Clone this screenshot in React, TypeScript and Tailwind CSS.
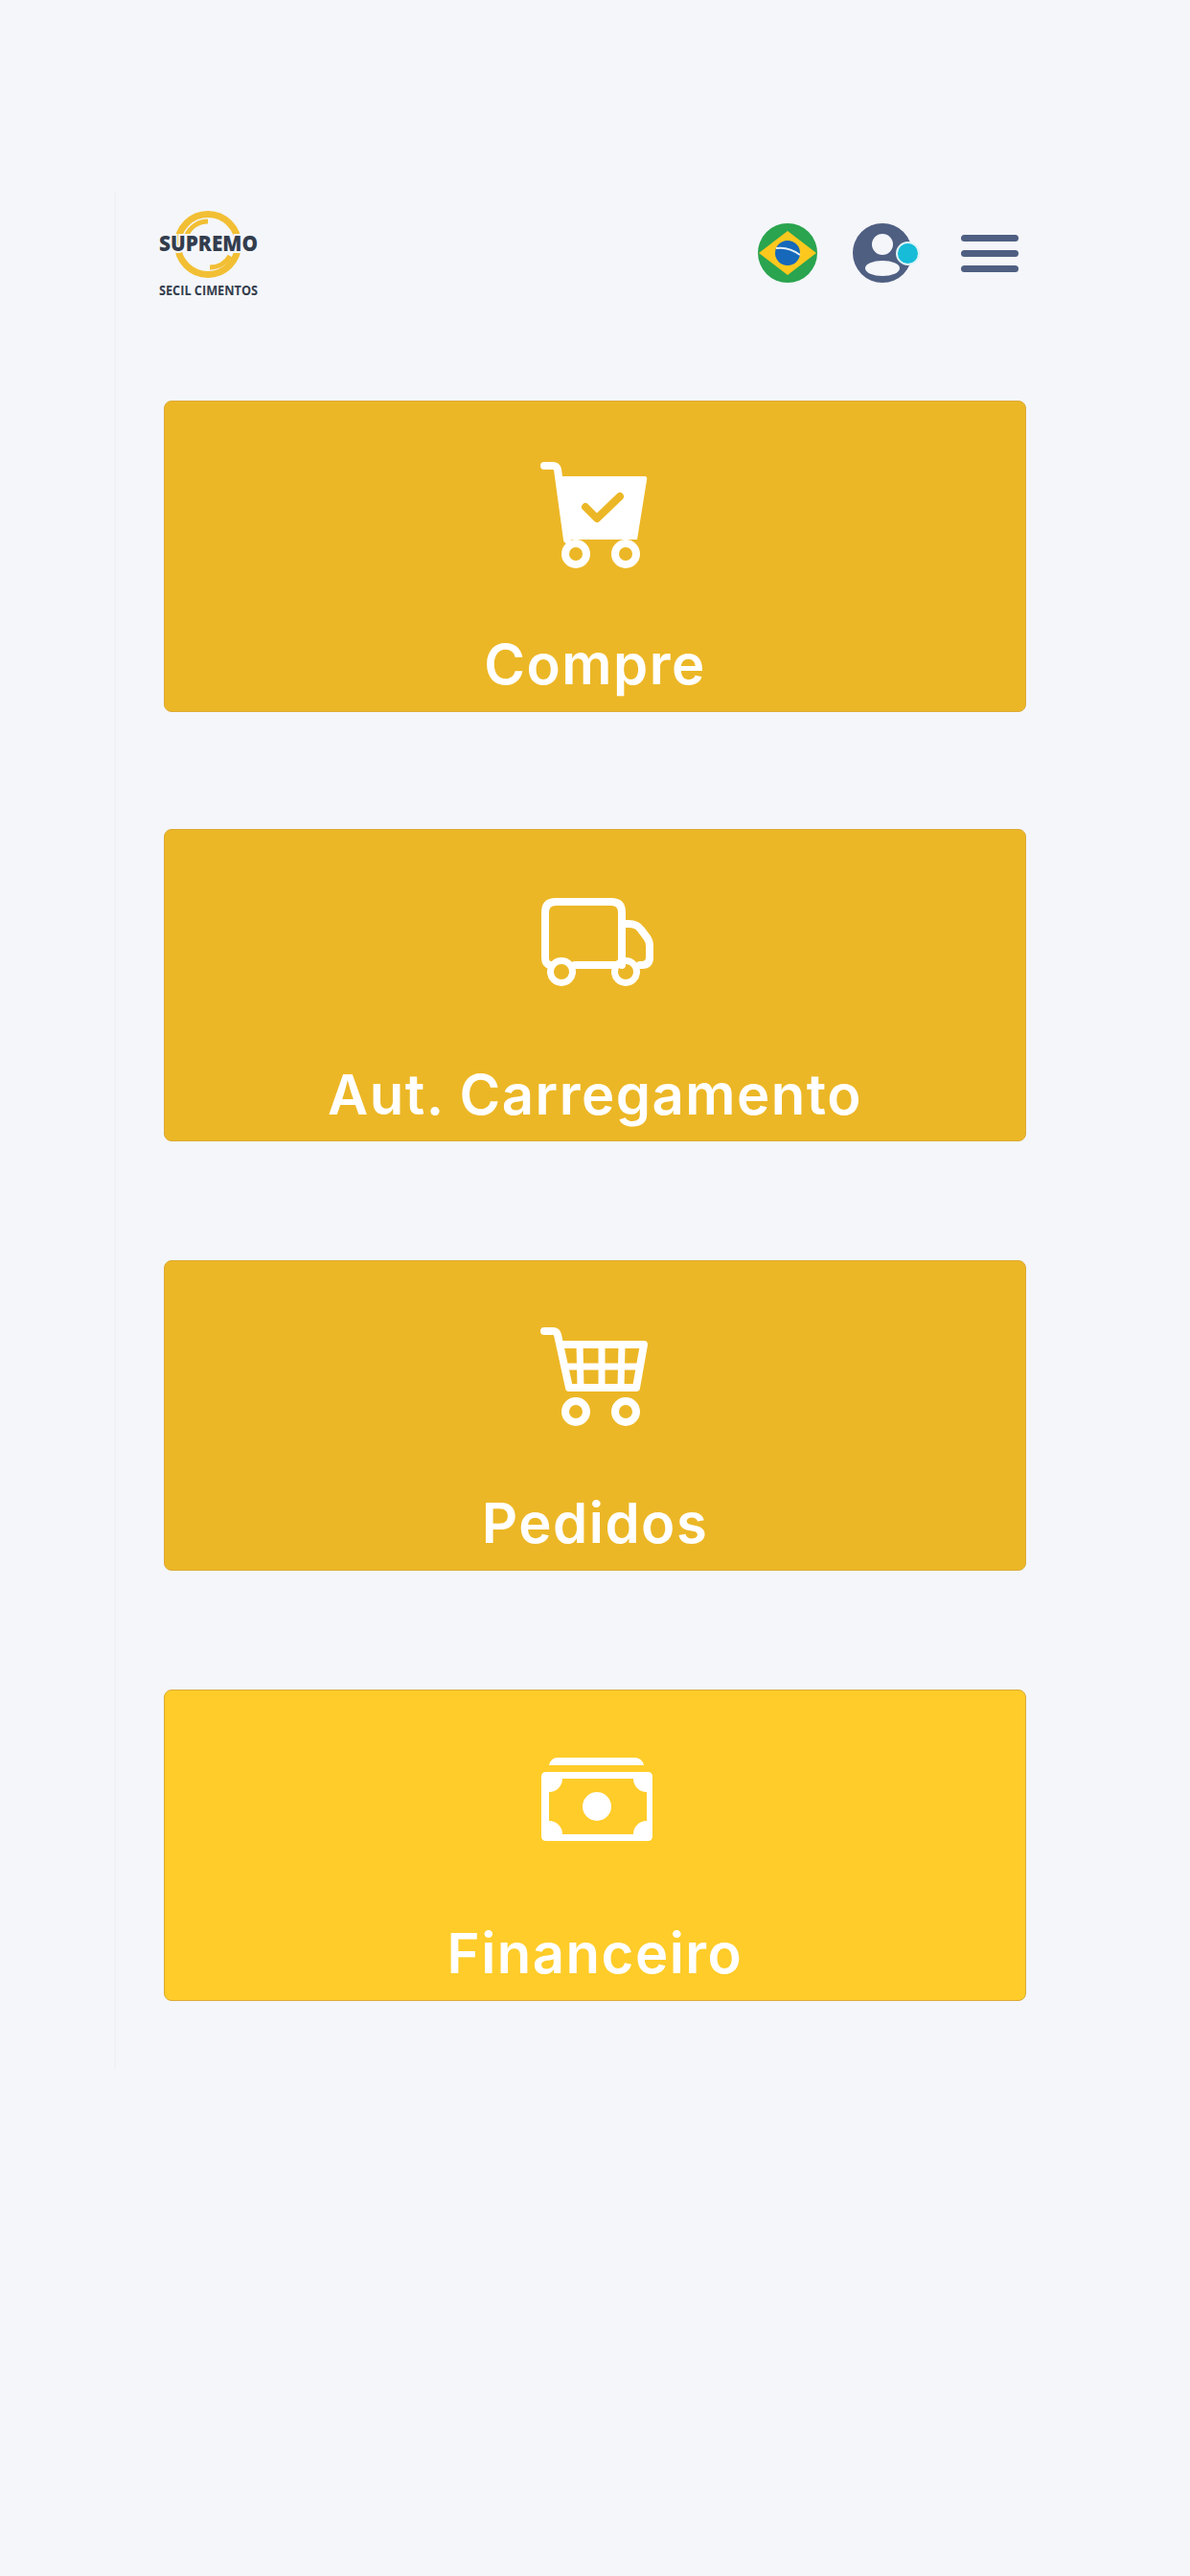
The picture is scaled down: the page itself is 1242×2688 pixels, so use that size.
const CARD_FONT = "font-['Inter','Noto_Sans',sans-serif]"

function CheckCartIcon() {
  return (
    <svg viewBox="-1 0 200 160" className="h-[160px] w-[200px]" fill="none" stroke="#fff">
      <path d="M46 35 H55 Q59 35 60 39 L70 112" strokeWidth="8" strokeLinecap="round" />
      <path d="M62 46 H151 Q154 46 153 50 L143 112 H68 Z" fill="#fff" stroke="none" />
      <path d="M89 78 L101 90 L125 67" stroke="#ecb726" strokeWidth="8" strokeLinecap="round" strokeLinejoin="round" />
      <circle cx="79" cy="127" r="11" strokeWidth="8" />
      <circle cx="131" cy="127" r="11" strokeWidth="8" />
    </svg>
  )
}

function TruckIcon() {
  return (
    <svg viewBox="-1 -13 200 160" className="h-[160px] w-[200px]" fill="none" stroke="#fff" strokeWidth="8" strokeLinecap="round" strokeLinejoin="round">
      <path d="M52 96 Q47 95 47 88 V41 Q47 30 58 30 H116 Q127 30 127 41 V96" />
      <path d="M78 96 H120" />
      <path d="M127 53 H134 Q143 53 147 59 L153 67 Q156 71 156 76 V88 Q156 96 148 96 H146" />
      <circle cx="64" cy="103" r="11.5" strokeWidth="7" />
      <circle cx="131" cy="103" r="11.5" strokeWidth="7" />
    </svg>
  )
}

function GridCartIcon() {
  return (
    <svg viewBox="-1 -13 200 160" className="h-[160px] w-[200px]" fill="none" stroke="#fff">
      <path d="M46 28 H55 Q59 28 60 32 L72 87" strokeWidth="8" strokeLinecap="round" />
      <path d="M62 42 H150 L142 87 H71" strokeWidth="8" strokeLinejoin="round" />
      <path d="M66 65 H146 M83 42 L84 87 M106 42 V87 M127 42 L126 87" strokeWidth="7" />
      <circle cx="79" cy="112" r="11" strokeWidth="8" />
      <circle cx="131" cy="112" r="11" strokeWidth="8" />
    </svg>
  )
}

function MoneyIcon() {
  return (
    <svg viewBox="-1 -15 200 160" className="h-[160px] w-[200px]" fill="#fff">
      <path d="M60 23 H140 Q148 23 150 31 H51 Q53 23 60 23 Z" />
      <path
        fillRule="evenodd"
        d="M48 38 H154 Q159 38 159 43 V105 Q159 110 154 110 H48 Q43 110 43 105 V43 Q43 38 48 38 Z M65 45 H139 A14 14 0 0 0 153 59 V89 A14 14 0 0 0 139 103 H65 A14 14 0 0 0 51 89 V59 A14 14 0 0 0 65 45 Z"
      />
      <circle cx="101" cy="74" r="15" />
    </svg>
  )
}

function Logo() {
  return (
    <svg viewBox="0 0 130 110" className="h-[110px] w-[130px]" fill="none">
      <circle cx="53" cy="46" r="31.5" stroke="#f2bf34" strokeWidth="7" />
      <path d="M31 36 A24 24 0 0 1 53 22" stroke="#f2bf34" strokeWidth="5" />
      <path d="M55 70 A24 24 0 0 0 76 58" stroke="#f2bf34" strokeWidth="5" />
      <text x="2" y="53" fontFamily="'Open Sans', sans-serif" fontSize="23" fontWeight="800" fill="#333d4d" stroke="#f4f6fa" strokeWidth="4" paintOrder="stroke" textLength="103" lengthAdjust="spacingAndGlyphs">SUPREMO</text>
      <text x="2" y="99" fontFamily="'Open Sans', sans-serif" fontSize="14" fontWeight="700" fill="#333d4d" textLength="103" lengthAdjust="spacingAndGlyphs">SECIL CIMENTOS</text>
    </svg>
  )
}

function BrazilFlag() {
  return (
    <svg viewBox="0 0 62 62" className="h-[62px] w-[62px]">
      <circle cx="31" cy="31" r="31" fill="#2aa44f" />
      <path d="M31 8 L61 31 L31 54 L1 31 Z" fill="#fcc81e" />
      <circle cx="31" cy="31" r="13" fill="#1668bb" />
      <path d="M19 26 Q32 24 44 33" fill="none" stroke="#e8f1f6" strokeWidth="2" />
    </svg>
  )
}

function UserIcon() {
  return (
    <div className="relative h-[62px] w-[62px]">
      <svg viewBox="0 0 62 62" className="h-[62px] w-[62px]">
        <circle cx="31" cy="31" r="31" fill="#4f5f82" />
        <circle cx="31" cy="22" r="11" fill="#f4f6fa" />
        <ellipse cx="31" cy="47" rx="18" ry="8" fill="#f4f6fa" />
      </svg>
      <span className="absolute left-[45px] top-[19px] h-[25px] w-[25px] rounded-full border-2 border-[#dff3f7] bg-[#16bcd8]" />
    </div>
  )
}

const cards = [
  { label: 'Compre', icon: <CheckCartIcon />, color: 'bg-[#ecb726]', height: 'h-[325px]', gap: 'mb-[122px]', textGap: 'mt-[53px]' },
  { label: 'Aut. Carregamento', icon: <TruckIcon />, color: 'bg-[#ecb726]', height: 'h-[326px]', gap: 'mb-[124px]', textGap: 'mt-[55px]' },
  { label: 'Pedidos', icon: <GridCartIcon />, color: 'bg-[#ecb726]', height: 'h-[324px]', gap: 'mb-[124px]', textGap: 'mt-[52px]' },
  { label: 'Financeiro', icon: <MoneyIcon />, color: 'bg-[#ffcc29]', height: 'h-[325px]', gap: '', textGap: 'mt-[53px]' },
]

export default function App() {
  return (
    <div className="min-h-[2688px] bg-[#f4f6fa] pt-[200px]">
      <div className="ml-[119px] h-[1960px] w-[960px] border-l-2 border-[#f0f2f6]">
        <header className="flex h-[128px] items-center pl-[43px]">
          <Logo />
          <div className="ml-auto flex items-center">
            <BrazilFlag />
            <div className="ml-[37px]"><UserIcon /></div>
            <button aria-label="Menu" className="ml-[51px] mr-[16px] flex w-[60px] flex-col gap-[9px]">
              <span className="h-[7px] rounded-full bg-[#4f5f82]" />
              <span className="h-[7px] rounded-full bg-[#4f5f82]" />
              <span className="h-[7px] rounded-full bg-[#4f5f82]" />
            </button>
          </div>
        </header>
        <main className="ml-[50px] mt-[90px] w-[900px]">
          {cards.map((card) => (
            <div key={card.label} className={`${card.color} ${card.height} ${card.gap} flex flex-col items-center rounded-[8px] border border-[#dcaa35] pt-[32px]`}>
              {card.icon}
              <div className={`${CARD_FONT} ${card.textGap} text-[58px] font-semibold leading-[58px] tracking-[1.5px] text-white`}>{card.label}</div>
            </div>
          ))}
        </main>
      </div>
    </div>
  )
}
